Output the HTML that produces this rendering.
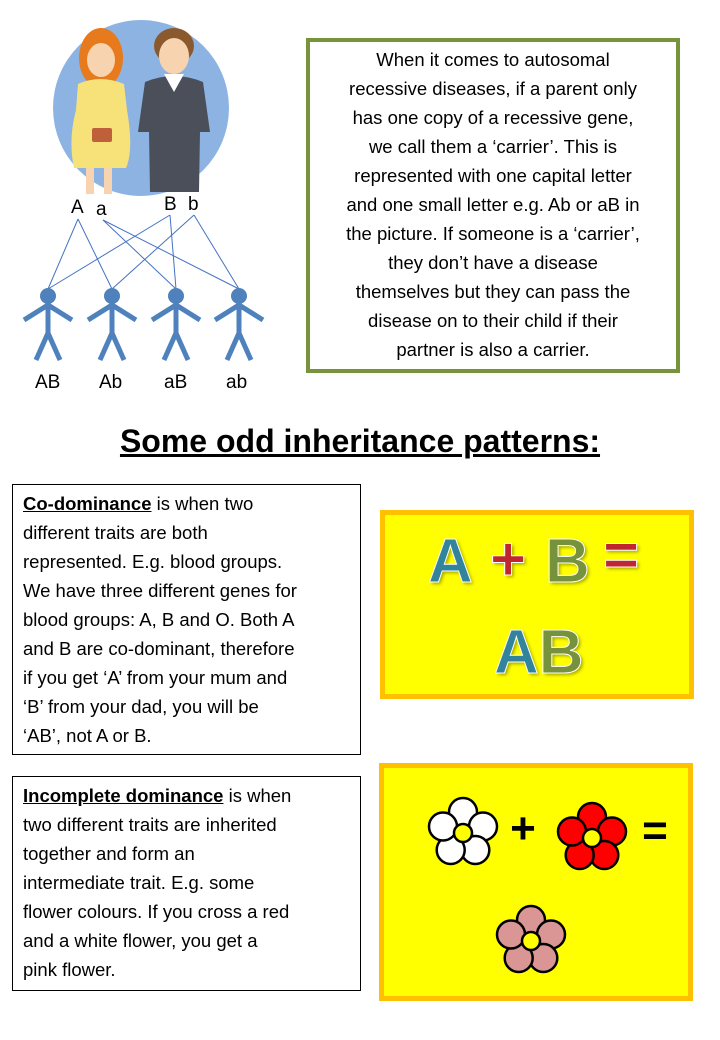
<!DOCTYPE html>
<html><head><meta charset="utf-8"><style>
body{margin:0;width:720px;height:1040px;background:#fff;position:relative;font-family:"Liberation Sans",sans-serif;overflow:hidden}
.a{position:absolute}
.green{left:306px;top:38px;width:366px;height:324px;border:4px solid #77933c;text-align:center;font-size:18.5px;line-height:29px;padding-top:3px;box-sizing:content-box}
.box{border:1px solid #000;font-size:18.5px;line-height:29px;padding:4px 0 0 10px;box-sizing:border-box}
.yel{background:#ffff00;border:5px solid #ffc000;box-sizing:border-box}
.big{font-weight:bold;font-size:62px;-webkit-text-stroke:1px #fff;text-shadow:2px 2px 3px rgba(0,0,0,.35)}
</style></head><body>
<svg class="a" style="left:0;top:0" width="300" height="400">
<circle cx="141" cy="108" r="88" fill="#8db3e2"/>
<!-- woman -->
<ellipse cx="101" cy="58" rx="22" ry="30" fill="#e87a1e"/>
<ellipse cx="101" cy="60" rx="14" ry="17" fill="#f7d3b0"/>
<path d="M78 84 Q100 74 124 84 L127 110 Q134 150 126 168 L74 168 Q68 140 76 110 Z" fill="#f7e27a"/>
<rect x="86" y="168" width="8" height="26" fill="#f7d3b0"/><rect x="104" y="168" width="8" height="26" fill="#f7d3b0"/>
<rect x="92" y="128" width="20" height="14" rx="2" fill="#c0603a"/>
<!-- man -->
<ellipse cx="174" cy="46" rx="20" ry="18" fill="#8a5a2e"/>
<ellipse cx="174" cy="56" rx="15" ry="18" fill="#f7d3b0"/>
<path d="M145 82 Q174 70 203 82 L210 132 L200 132 L199 192 L150 192 L149 132 L138 132 Z" fill="#4a4f5a"/>
<path d="M164 74 L174 92 L184 74 Z" fill="#fff"/>
<g stroke="#4472c4" stroke-width="1"><line x1="78" y1="219" x2="48" y2="289"/><line x1="78" y1="219" x2="112" y2="289"/><line x1="103" y1="220" x2="176" y2="289"/><line x1="103" y1="220" x2="239" y2="289"/><line x1="170" y1="215" x2="48" y2="289"/><line x1="170" y1="215" x2="176" y2="289"/><line x1="194" y1="215" x2="112" y2="289"/><line x1="194" y1="215" x2="239" y2="289"/></g>
<g font-size="19" fill="#000" font-family="Liberation Sans"><text x="71" y="213">A</text><text x="96" y="215">a</text><text x="164" y="210">B</text><text x="188" y="210">b</text>
<text x="35" y="388">AB</text><text x="99" y="388">Ab</text><text x="164" y="388">aB</text><text x="226" y="388">ab</text></g>
<g fill="#4f81bd" stroke="#4f81bd" stroke-width="5">
<g transform="translate(48,0)"><circle cx="0" cy="296" r="8" stroke="none"/><path d="M0 300 V333 M-24 320 L0 305 L24 320 M-12 360 L0 333 L12 360" fill="none"/></g>
<g transform="translate(112,0)"><circle cx="0" cy="296" r="8" stroke="none"/><path d="M0 300 V333 M-24 320 L0 305 L24 320 M-12 360 L0 333 L12 360" fill="none"/></g>
<g transform="translate(176,0)"><circle cx="0" cy="296" r="8" stroke="none"/><path d="M0 300 V333 M-24 320 L0 305 L24 320 M-12 360 L0 333 L12 360" fill="none"/></g>
<g transform="translate(239,0)"><circle cx="0" cy="296" r="8" stroke="none"/><path d="M0 300 V333 M-24 320 L0 305 L24 320 M-12 360 L0 333 L12 360" fill="none"/></g>
</g></svg>
<div class="a green">When it comes to autosomal<br>recessive diseases, if a parent only<br>has one copy of a recessive gene,<br>we call them a ‘carrier’. This is<br>represented with one capital letter<br>and one small letter e.g. Ab or aB in<br>the picture. If someone is a ‘carrier’,<br>they don’t have a disease<br>themselves but they can pass the<br>disease on to their child if their<br>partner is also a carrier.</div>
<div class="a" style="left:0;width:720px;top:423px;text-align:center;font-weight:bold;font-size:32px;text-decoration:underline">Some odd inheritance patterns:</div>
<div class="a box" style="left:12px;top:484px;width:349px;height:271px"><b><u>Co-dominance</u></b> is when two<br>different traits are both<br>represented. E.g. blood groups.<br>We have three different genes for<br>blood groups: A, B and O. Both A<br>and B are co-dominant, therefore<br>if you get ‘A’ from your mum and<br>‘B’ from your dad, you will be<br>‘AB’, not A or B.</div>
<div class="a box" style="left:12px;top:776px;width:349px;height:215px"><b><u>Incomplete dominance</u></b> is when<br>two different traits are inherited<br>together and form an<br>intermediate trait. E.g. some<br>flower colours. If you cross a red<br>and a white flower, you get a<br>pink flower.</div>
<div class="a yel" style="left:380px;top:510px;width:314px;height:189px"></div>
<div class="a big" style="left:428px;top:526px;color:#31849b">A</div>
<div class="a big" style="left:490px;top:524px;color:#c0262d">+</div>
<div class="a big" style="left:545px;top:526px;color:#76923c">B</div>
<div class="a big" style="left:603px;top:520px;color:#c0262d">=</div>
<div class="a big" style="left:494px;top:617px"><span style="color:#31849b">A</span><span style="color:#76923c">B</span></div>
<div class="a yel" style="left:379px;top:763px;width:314px;height:238px"></div>
<svg class="a" style="left:380px;top:763px" width="312" height="238">
<defs><g id="f"><g stroke="#000" stroke-width="2.5"><circle cx="0" cy="-21" r="14"/><circle cx="20" cy="-6.5" r="14"/><circle cx="12.3" cy="17" r="14"/><circle cx="-12.3" cy="17" r="14"/><circle cx="-20" cy="-6.5" r="14"/></g><circle r="9" fill="#ffff00" stroke="#000" stroke-width="2.5"/></g></defs>
<use href="#f" x="83" y="70" fill="#fff"/>
<use href="#f" x="212" y="75" fill="#ff0000"/>
<use href="#f" x="151" y="178" fill="#d99694"/>
<text x="143" y="80" font-size="44" font-weight="bold" text-anchor="middle" font-family="Liberation Sans">+</text>
<text x="275" y="82" font-size="44" font-weight="bold" text-anchor="middle" font-family="Liberation Sans">=</text>
</svg>
</body></html>
